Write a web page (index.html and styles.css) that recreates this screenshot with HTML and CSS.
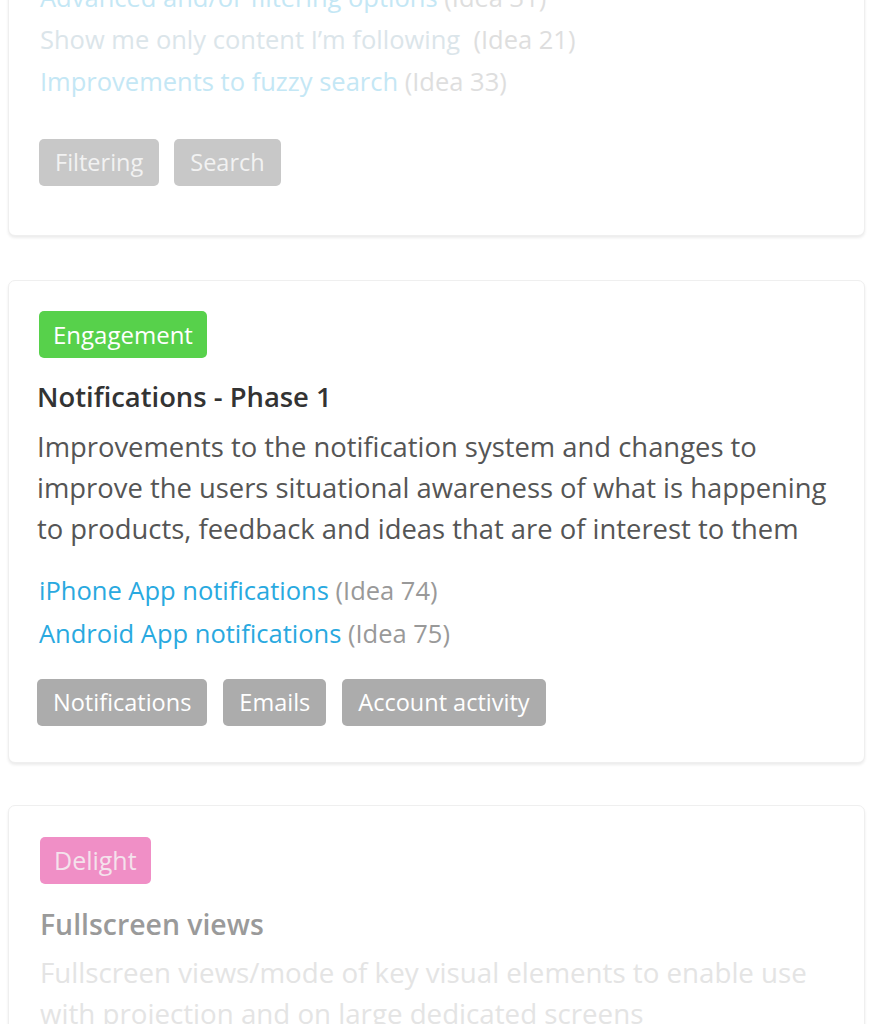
FILE: index.html
```html
<!DOCTYPE html>
<html lang="en">
<head>
<meta charset="utf-8">
<title>Roadmap</title>
<link rel="stylesheet" href="styles.css">
</head>
<body>
<main class="list">
  <section class="card card-faded-top">
    <ul class="ideas">
      <li><a class="idea-link" href="#">Advanced and/or filtering options</a> <span class="idea-num">(Idea 31)</span></li>
      <li><a class="idea-link pale" href="#">Show me only content I’m following</a> &nbsp;<span class="idea-num">(Idea 21)</span></li>
      <li><a class="idea-link" href="#">Improvements to fuzzy search</a> <span class="idea-num">(Idea 33)</span></li>
    </ul>
    <div class="tags">
      <span class="tag">Filtering</span>
      <span class="tag">Search</span>
    </div>
  </section>

  <section class="card">
    <span class="badge badge-green">Engagement</span>
    <h2 class="title">Notifications - Phase 1</h2>
    <p class="desc">Improvements to the notification system and changes to improve the users situational awareness of what is happening to products, feedback and ideas that are of interest to them</p>
    <ul class="ideas">
      <li><a class="idea-link" href="#">iPhone App notifications</a> <span class="idea-num">(Idea 74)</span></li>
      <li><a class="idea-link" href="#">Android App notifications</a> <span class="idea-num">(Idea 75)</span></li>
    </ul>
    <div class="tags">
      <span class="tag">Notifications</span>
      <span class="tag">Emails</span>
      <span class="tag">Account activity</span>
    </div>
  </section>

  <section class="card card-faded-bottom">
    <span class="badge badge-pink">Delight</span>
    <h2 class="title">Fullscreen views</h2>
    <p class="desc">Fullscreen views/mode of key visual elements to enable use with projection and on large dedicated screens</p>
  </section>
</main>
</body>
</html>
```

FILE: styles.css
```css
* { box-sizing: border-box; }
html, body { margin: 0; padding: 0; background: #fff; }
body {
  font-family: "Open Sans", "Noto Sans", "DejaVu Sans", sans-serif;
  color: #555;
  overflow: hidden;
  height: 1024px;
}
.list {
  display: flex;
  flex-direction: column;
  gap: 44px;
  padding: 0 8px;
  margin-top: -24px;
}
.card {
  background: #fff;
  border: 1px solid #efefef;
  border-radius: 7px;
  box-shadow: 0 2px 3px rgba(0,0,0,0.08);
  padding: 30px 28px 36px;
}
.badge {
  display: inline-block;
  height: 47px;
  line-height: 47px;
  padding: 0 14px;
  border-radius: 5px;
  color: #fff;
  font-size: 24px;
  margin-left: 2px;
}
.badge-green { background: #57d14b; }
.badge-pink { background: #f08fc6; color: #f4e2ec; }
.title {
  margin: 19px 0 0;
  font-size: 27.4px;
  font-weight: 600;
  color: #333;
  line-height: 40px;
}
.desc {
  margin: 9px 0 0;
  font-size: 27.4px;
  line-height: 41px;
  color: #555;
}
.ideas {
  list-style: none;
  margin: 20px 0 0;
  padding: 0 0 0 2px;
  font-size: 25.5px;
  line-height: 43px;
}
.idea-link { color: #29a9e0; text-decoration: none; }
.idea-num { color: #999; }
.tags {
  display: flex;
  gap: 16px;
  margin-top: 24px;
}
.tag {
  display: inline-block;
  height: 47px;
  line-height: 47px;
  padding: 0 16px;
  border-radius: 5px;
  background: #acacac;
  color: #fff;
  font-size: 23.5px;
}

/* faded card scrolling out at the top */
.card-faded-top { padding: 0 29px 49px 30px; }
.card-faded-top .ideas { margin-top: -1px; line-height: 42px; padding-left: 1px; }
.card-faded-top .idea-link { color: #c4e7f5; }
.card-faded-top .idea-link.pale { color: #dbe5ea; }
.card-faded-top .idea-num { color: #dedede; }
.card-faded-top .tags { margin-top: 37px; gap: 15px; }
.card-faded-top .tag { background: #c8c8c8; color: #f2f2f2; }

/* faded card scrolling in at the bottom */
.card-faded-bottom { margin-top: -2px; padding-top: 31px; padding-left: 31px; }
.card-faded-bottom .badge { margin-left: 0; font-size: 25px; }
.card-faded-bottom .title { color: #9a9a9a; margin-top: 20px; font-size: 28.4px; }
.card-faded-bottom .desc { color: #e4e4e4; margin-top: 8px; font-size: 27.7px; }
```
